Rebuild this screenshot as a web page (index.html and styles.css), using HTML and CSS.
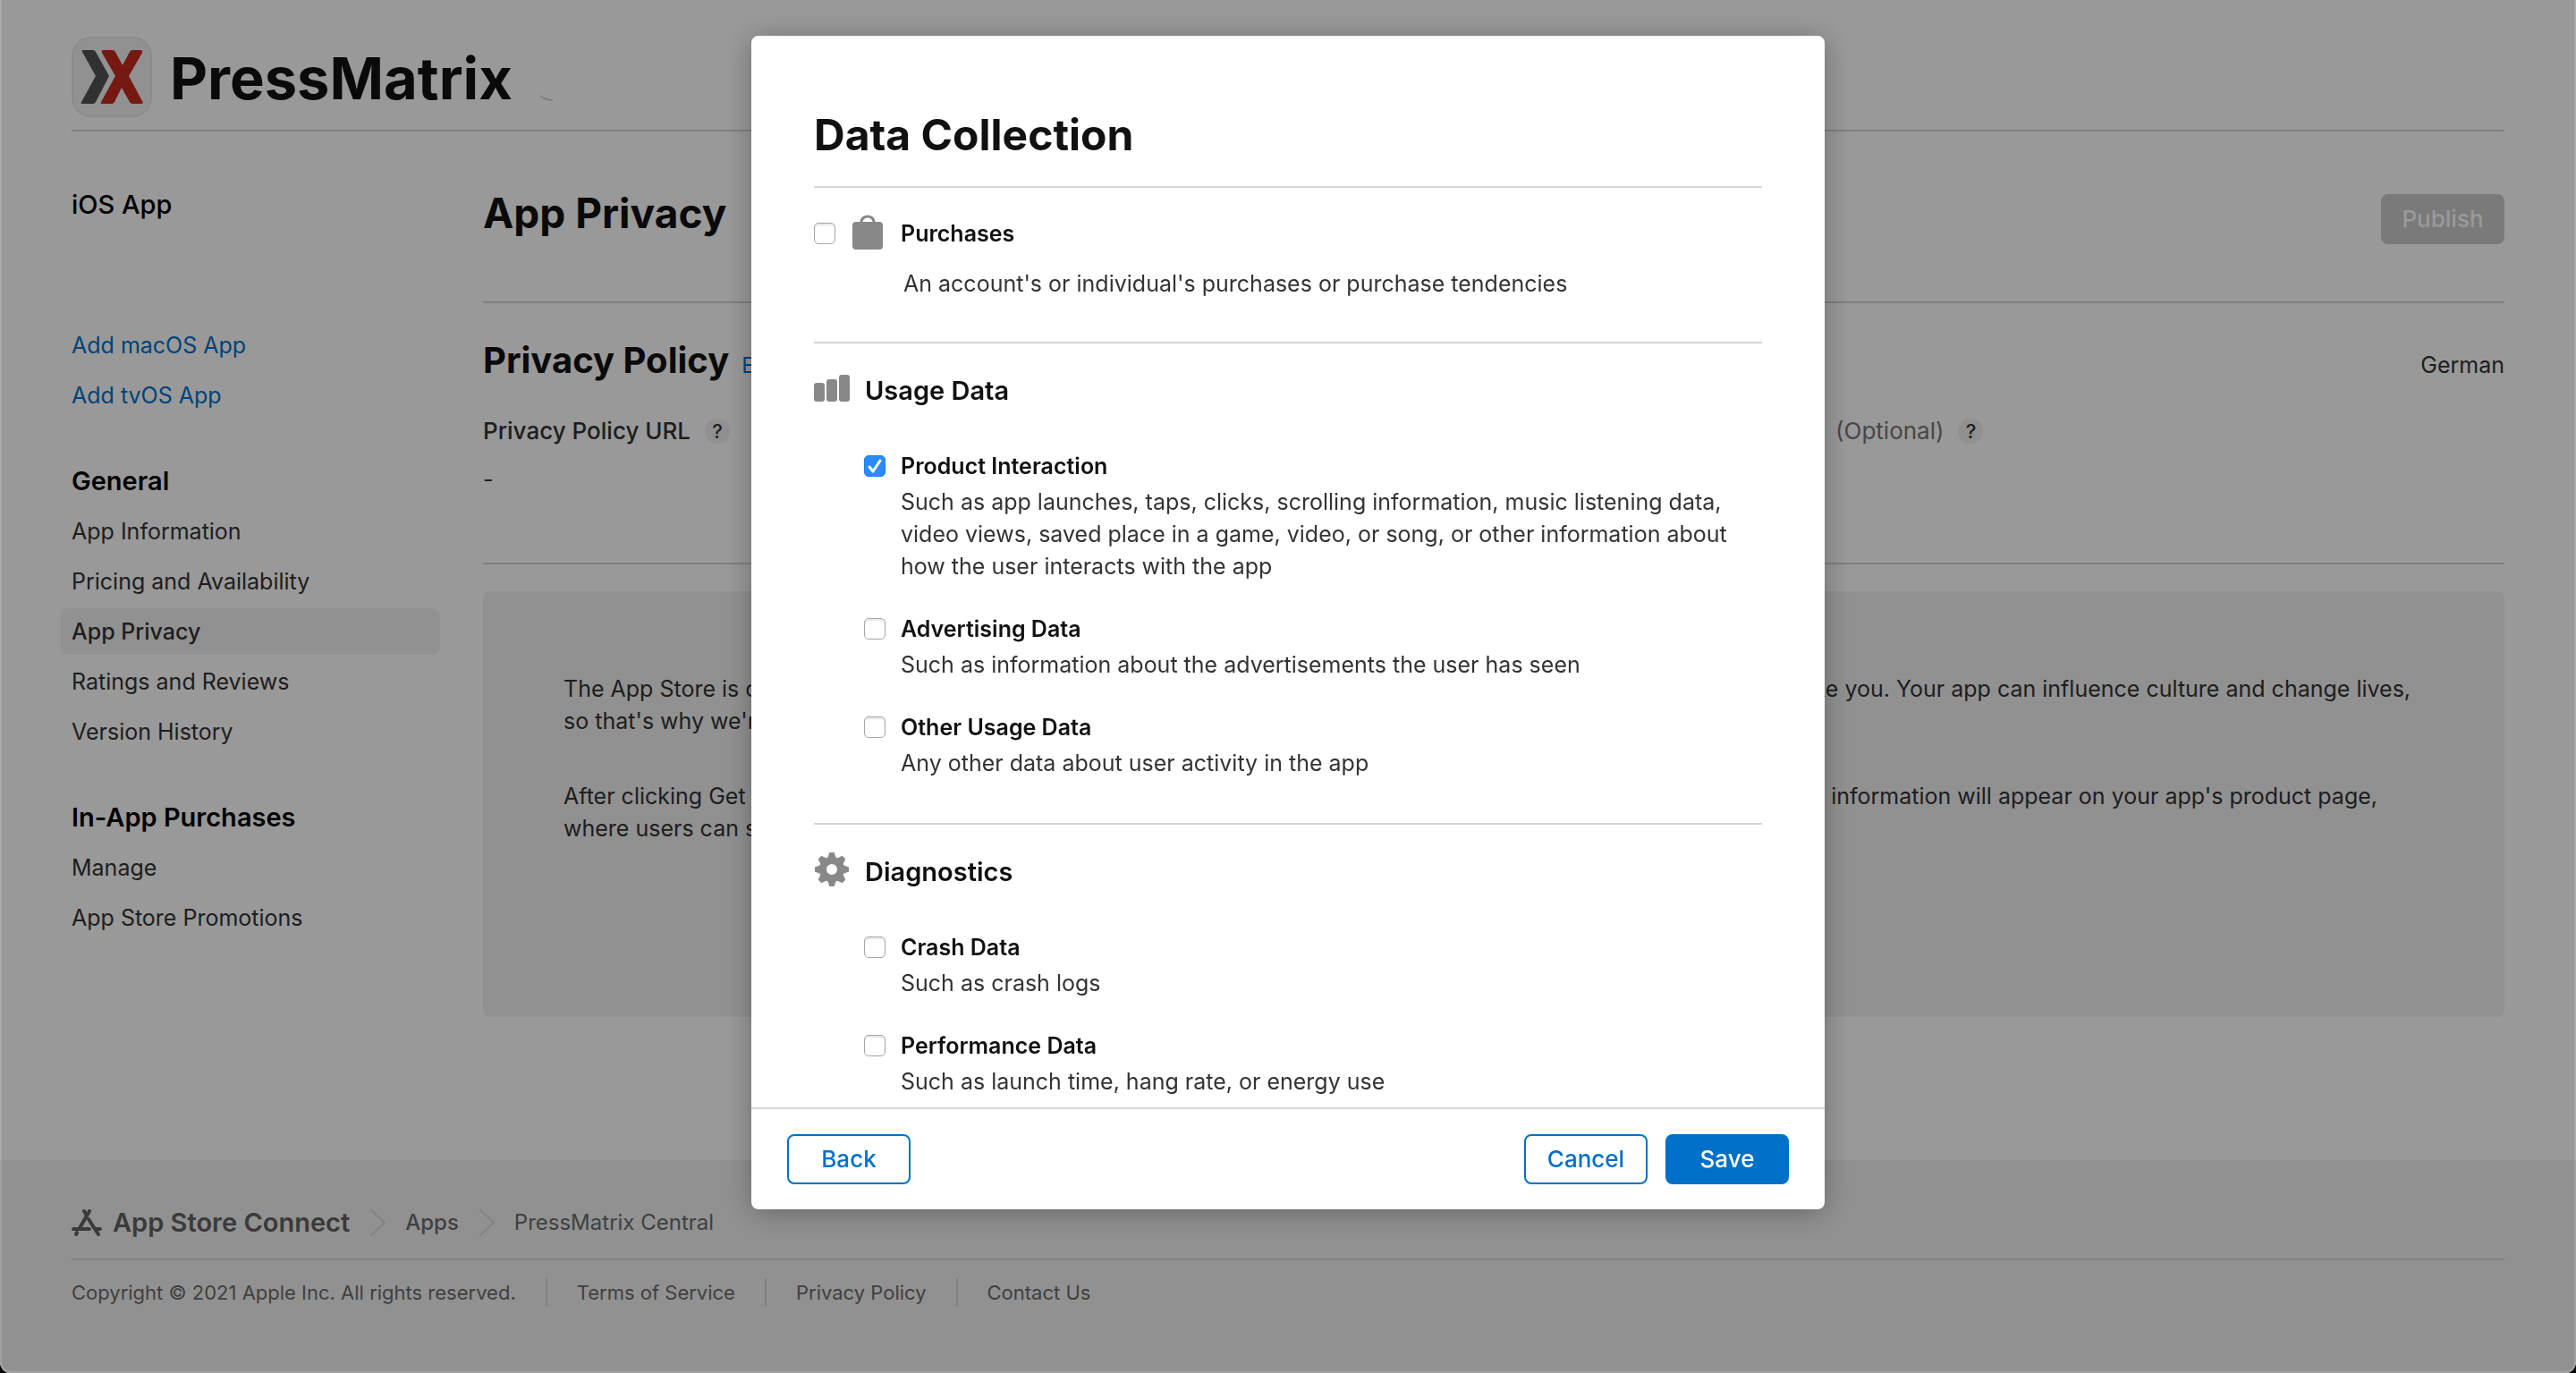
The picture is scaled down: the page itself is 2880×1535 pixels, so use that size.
FILE: index.html
```html
<!DOCTYPE html>
<html lang="en">
<head>
<meta charset="utf-8">
<title>App Privacy - App Store Connect</title>
<link rel="stylesheet" href="styles.css">
</head>
<body>
<div class="page">
  <header class="app-header">
    <svg class="app-icon" viewBox="0 0 90 90" aria-hidden="true">
      <rect x="1" y="1" width="88" height="88" rx="20" fill="#f2f2f2" stroke="#dcdcdc" stroke-width="1"/>
      <path d="M13 15H24Q26 15 27 17L42 44L27 73Q26 75 24 75H12Q10 75 11 73L27 44L12 17Q11 15 13 15Z" fill="#525252"/>
      <path d="M35 15H46Q48 15 49 17L57 32L65 17Q66 15 68 15H77Q80 15 79 18L64 44L79 72Q81 75 78 75H68Q66 75 65 73L56 57L48 73Q47 75 45 75H34Q32 75 33 73L49 44L34 18Q33 15 35 15Z" fill="#c42a1f"/>
    </svg>
    <h1 class="app-name">PressMatrix</h1>
    <svg class="app-mark" viewBox="0 0 16 8" aria-hidden="true"><path d="M1 1Q6 6 15 6" fill="none" stroke="#d6d6d6" stroke-width="2"/></svg>
  </header>

  <div class="columns">
    <nav class="sidebar" aria-label="App">
      <h2 class="side-title">iOS App</h2>
      <div class="side-group side-group-add">
        <a class="side-link add" href="#">Add macOS App</a>
        <a class="side-link add" href="#">Add tvOS App</a>
      </div>
      <h2 class="side-heading">General</h2>
      <div class="side-group">
        <a class="side-link" href="#">App Information</a>
        <a class="side-link" href="#">Pricing and Availability</a>
        <a class="side-link current" href="#" aria-current="page">App Privacy</a>
        <a class="side-link" href="#">Ratings and Reviews</a>
        <a class="side-link" href="#">Version History</a>
      </div>
      <h2 class="side-heading">In-App Purchases</h2>
      <div class="side-group">
        <a class="side-link" href="#">Manage</a>
        <a class="side-link" href="#">App Store Promotions</a>
      </div>
    </nav>

    <main class="content">
      <div class="content-head">
        <h2 class="content-title">App Privacy</h2>
        <button class="button publish" type="button" disabled>Publish</button>
      </div>
      <section class="policy">
        <div class="policy-head">
          <h3 class="policy-title">Privacy Policy</h3>
          <a class="edit" href="#">Edit</a>
          <span class="language">German</span>
        </div>
        <div class="policy-fields">
          <div>
            <p class="field-name">Privacy Policy URL <button class="help" type="button">?</button></p>
            <p class="field-value">-</p>
          </div>
          <div>
            <p class="field-name">User Privacy Choices URL <span class="optional">(Optional)</span> <button class="help" type="button">?</button></p>
            <p class="field-value">-</p>
          </div>
        </div>
      </section>
      <section class="intro">
        <p>The App Store is committed to being a safe and trusted place for people to discover apps by talented developers just like you. Your app can influence culture and change lives, so that's why we're counting on you to help protect the privacy of everyone who uses it.</p>
        <p>After clicking Get Started, you will be asked several questions about the data your app collects and how it is used. Such information will appear on your app's product page, where users can see what data your app collects.</p>
      </section>
    </main>
  </div>

  <footer class="footer">
    <nav class="crumbs" aria-label="Breadcrumb">
      <a class="crumb-home" href="#">
        <svg class="store-icon" viewBox="0 0 34 31" aria-hidden="true">
          <g fill="none" stroke="#626262" stroke-width="4" stroke-linecap="round">
            <path d="M20 2L9 21"/><path d="M14 2L17 7"/><path d="M19 11L30 28"/><path d="M2 22H20"/><path d="M27 22H32"/><path d="M6 26L5 28"/>
          </g>
        </svg>
        <span>App Store Connect</span>
      </a>
      <svg class="chevron" viewBox="0 0 18 30" aria-hidden="true"><path d="M1 0L17 15L1 30"/></svg>
      <a class="crumb-apps" href="#">Apps</a>
      <svg class="chevron" viewBox="0 0 18 30" aria-hidden="true"><path d="M1 0L17 15L1 30"/></svg>
      <a class="crumb-app" href="#">PressMatrix Central</a>
    </nav>
    <div class="legal">
      <span>Copyright © 2021 Apple Inc. All rights reserved.</span>
      <a href="#">Terms of Service</a>
      <a href="#">Privacy Policy</a>
      <a href="#">Contact Us</a>
    </div>
  </footer>
</div>

<div class="overlay">
  <form class="modal" role="dialog" aria-labelledby="modal-title">
    <div class="modal-body">
      <h2 class="modal-title" id="modal-title">Data Collection</h2>

      <section class="group group-single">
        <div class="single">
          <input class="check" type="checkbox" id="purchases">
          <svg class="bag" viewBox="0 0 34 40" aria-hidden="true">
            <rect x="0" y="8" width="34" height="31" rx="4" fill="#888"/>
            <path d="M10 10V8a7 6 0 0 1 14 0v2" fill="none" stroke="#888" stroke-width="3"/>
          </svg>
          <label class="item-name" for="purchases">Purchases</label>
        </div>
        <p class="item-text single-text">An account's or individual's purchases or purchase tendencies</p>
      </section>

      <section class="group">
        <h3 class="group-title">
          <svg class="group-icon" viewBox="0 0 40 40" aria-hidden="true">
            <g fill="#888"><rect x="0" y="14" width="12" height="21" rx="3"/><rect x="14" y="10" width="12" height="25" rx="3"/><rect x="28" y="5" width="12" height="30" rx="3"/></g>
          </svg>
          Usage Data
        </h3>
        <div class="items">
          <div class="item">
            <input class="check" type="checkbox" id="interaction" checked>
            <label class="item-name" for="interaction">Product Interaction</label>
            <p class="item-text">Such as app launches, taps, clicks, scrolling information, music listening data, video views, saved place in a game, video, or song, or other information about how the user interacts with the app</p>
          </div>
          <div class="item">
            <input class="check" type="checkbox" id="advertising">
            <label class="item-name" for="advertising">Advertising Data</label>
            <p class="item-text">Such as information about the advertisements the user has seen</p>
          </div>
          <div class="item">
            <input class="check" type="checkbox" id="other">
            <label class="item-name" for="other">Other Usage Data</label>
            <p class="item-text">Any other data about user activity in the app</p>
          </div>
        </div>
      </section>

      <section class="group">
        <h3 class="group-title">
          <svg class="group-icon" viewBox="0 0 40 40" aria-hidden="true">
            <defs><path id="tooth" d="M15 8L17 2Q17 1 18 1H22Q23 1 23 2L25 8Z"/></defs>
            <g fill="#888">
              <circle cx="20" cy="20" r="10" fill="none" stroke="#888" stroke-width="8"/>
              <use href="#tooth"/><use href="#tooth" transform="rotate(45 20 20)"/><use href="#tooth" transform="rotate(90 20 20)"/><use href="#tooth" transform="rotate(135 20 20)"/><use href="#tooth" transform="rotate(180 20 20)"/><use href="#tooth" transform="rotate(225 20 20)"/><use href="#tooth" transform="rotate(270 20 20)"/><use href="#tooth" transform="rotate(315 20 20)"/>
            </g>
          </svg>
          Diagnostics
        </h3>
        <div class="items">
          <div class="item">
            <input class="check" type="checkbox" id="crash">
            <label class="item-name" for="crash">Crash Data</label>
            <p class="item-text">Such as crash logs</p>
          </div>
          <div class="item">
            <input class="check" type="checkbox" id="performance">
            <label class="item-name" for="performance">Performance Data</label>
            <p class="item-text">Such as launch time, hang rate, or energy use</p>
          </div>
        </div>
      </section>
    </div>
    <div class="modal-actions">
      <button class="button outline" type="button">Back</button>
      <button class="button outline cancel" type="button">Cancel</button>
      <button class="button primary" type="submit">Save</button>
    </div>
  </form>
</div>
</body>
</html>
```
FILE: styles.css
```css
* { box-sizing: border-box; }

html { background: #000; }

body {
  margin: 0;
  font-family: Inter, "Liberation Sans", sans-serif;
  font-size: 25px;
  line-height: 36px;
  color: #333;
}

h1, h2, h3, p { margin: 0; }
a { color: inherit; text-decoration: none; }
svg { display: block; flex: none; }
button { font: inherit; }

.page {
  display: flex;
  flex-direction: column;
  min-height: 100vh;
  overflow: hidden;
  background: #fff;
  border-radius: 0 0 12px 12px;
}

/* App header */
.app-header {
  display: flex;
  align-items: center;
  margin: 0 80px;
  padding: 41px 0 14px;
  border-bottom: 2px solid #d6d6d6;
}
.app-icon { width: 90px; height: 90px; }
.app-name {
  margin-left: 20px;
  padding-top: 4px;
  font-size: 65px;
  line-height: 86px;
  font-weight: 700;
  color: #111;
}
.app-mark { width: 16px; height: 8px; margin: 48px 0 0 30px; }

.columns {
  display: grid;
  grid-template-columns: 412px 1fr;
  gap: 48px;
  padding: 0 80px 160px;
}

/* Sidebar */
.sidebar { padding-top: 64px; }
.side-title, .side-heading {
  font-size: 29px;
  line-height: 36px;
  font-weight: 600;
  color: #000;
}
.side-title { font-weight: 500; }
.side-heading { margin-top: 52px; }
.side-group {
  display: flex;
  flex-direction: column;
  gap: 4px;
  margin: 12px 0 0 -12px;
}
.side-group-add { margin-top: 113px; }
.side-link { padding: 8px 12px; border-radius: 8px; }
.side-link.add, .edit { color: #0070c9; }
.side-link.current { background: #f2f2f2; font-weight: 500; }

/* Content */
.content-head {
  display: flex;
  justify-content: space-between;
  align-items: flex-start;
  padding: 62px 0 64px;
  border-bottom: 2px solid #d6d6d6;
}
.content-title { font-size: 46px; line-height: 58px; font-weight: 700; color: #111; }

.button {
  width: 138px;
  height: 56px;
  padding: 0;
  border: 2px solid #0070c9;
  border-radius: 8px;
  font-size: 26px;
  font-weight: 500;
}
.publish { margin-top: 8px; border-color: #cbcbcb; background: #cbcbcb; color: #fff; }
.outline { background: #fff; color: #0070c9; }
.primary { background: #0070c9; color: #fff; }

.policy { padding: 40px 0 75px; border-bottom: 2px solid #d6d6d6; }
.policy-head { display: flex; align-items: baseline; gap: 14px; }
.policy-title { font-size: 40px; line-height: 48px; font-weight: 700; color: #111; }
.edit { font-size: 24px; }
.language { margin-left: auto; }
.policy-fields { display: grid; grid-template-columns: 1fr 1fr; gap: 92px; margin-top: 37px; }
.field-name { display: flex; align-items: center; gap: 8px; font-size: 26px; font-weight: 500; }
.field-value { margin-top: 18px; }
.optional { margin-left: 4px; font-weight: 400; color: #777; }
.help {
  width: 28px;
  height: 28px;
  margin-left: 8px;
  padding: 0;
  border: 0;
  border-radius: 50%;
  background: #f0f0f0;
  color: #333;
  font-size: 22px;
  line-height: 28px;
}

.intro {
  display: flex;
  flex-direction: column;
  gap: 48px;
  min-height: 476px;
  margin-top: 30px;
  padding: 91px 90px;
  border-radius: 8px;
  background: #f2f2f2;
}

/* Footer */
.footer { flex: 1; padding: 50px 80px 70px; background: #f2f2f2; color: #6b6b6b; }
.crumbs {
  display: flex;
  align-items: center;
  gap: 22px;
  padding-bottom: 20px;
  border-bottom: 2px solid #d6d6d6;
  font-size: 24px;
  line-height: 40px;
}
.crumb-home {
  display: flex;
  align-items: center;
  gap: 12px;
  font-size: 29px;
  font-weight: 600;
  color: #626262;
}
.crumb-apps { font-weight: 500; }
.store-icon { width: 34px; height: 31px; }
.chevron { width: 18px; height: 30px; }
.chevron path { fill: none; stroke: #dadada; stroke-width: 2; }
.legal { display: flex; padding-top: 20px; font-size: 22px; line-height: 32px; }
.legal a { margin-left: 33px; padding-left: 33px; border-left: 2px solid #d6d6d6; }

/* Modal */
.overlay {
  position: fixed;
  inset: 0;
  display: flex;
  justify-content: center;
  align-items: flex-start;
  padding-top: 40px;
  border: 2px solid rgba(255, 255, 255, 0.15);
  border-top: 0;
  border-radius: 0 0 12px 12px;
  background: rgba(0, 0, 0, 0.4);
}
.modal {
  width: 1200px;
  max-width: 100%;
  overflow: hidden;
  border-radius: 8px;
  background: #fff;
  box-shadow: 0 4px 32px rgba(0, 0, 0, 0.3);
}
.modal-body { padding: 80px 70px 11px; }
.modal-title {
  padding-bottom: 26px;
  font-size: 48px;
  line-height: 62px;
  font-weight: 700;
  color: #111;
}
.group { padding: 35px 0 49px; border-top: 2px solid #d6d6d6; }
.group-single { padding: 33px 0 47px; }
.group:last-child { padding-bottom: 0; }

.single { display: flex; align-items: center; }
.bag { width: 34px; height: 40px; margin: -3px 20px -1px 19px; }
.single-text { margin: 20px 0 0 100px; }

.group-title {
  display: flex;
  align-items: center;
  gap: 17px;
  font-size: 29px;
  font-weight: 600;
  color: #111;
}
.group-icon { width: 40px; height: 40px; margin: -5px 0 1px; }
.items { display: grid; gap: 34px; margin: 48px 0 0 56px; }
.item {
  display: grid;
  grid-template-columns: 24px 1fr;
  gap: 4px 17px;
  align-items: center;
}
.item-name { font-weight: 600; color: #111; }
.item-text { grid-column: 2; }

.check {
  appearance: none;
  width: 24px;
  height: 24px;
  margin: 0;
  border: 1px solid #a6a6a6;
  border-radius: 5px;
  background: #fff;
  box-shadow: inset 0 2px 2px #e6e6e6;
}
.check:checked {
  border-color: #1a80f5;
  background: #2a8cfb url("data:image/svg+xml,%3Csvg xmlns='http://www.w3.org/2000/svg' viewBox='0 0 22 22'%3E%3Cpath d='M5 12L9 17L17 5' fill='none' stroke='white' stroke-width='3' stroke-linecap='round' stroke-linejoin='round'/%3E%3C/svg%3E");
  box-shadow: none;
}

.modal-actions {
  display: flex;
  gap: 20px;
  padding: 28px 40px;
  border-top: 2px solid #d6d6d6;
}
.cancel { margin-left: auto; }
```
